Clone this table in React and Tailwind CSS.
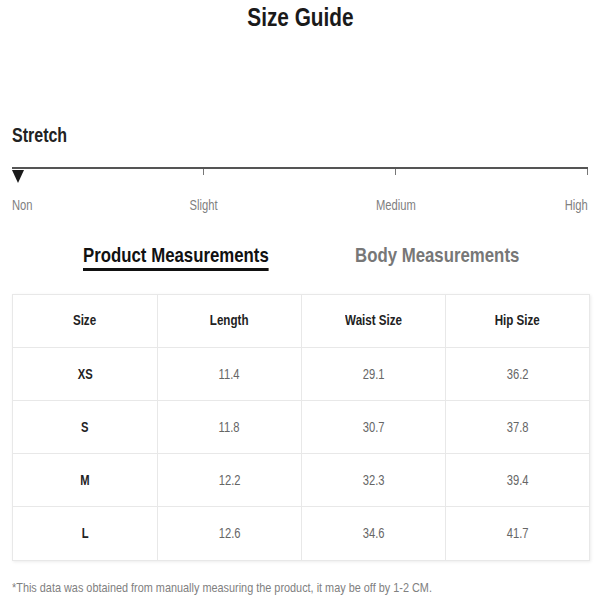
import React from 'react';

const rows = [
  ['XS', '11.4', '29.1', '36.2'],
  ['S', '11.8', '30.7', '37.8'],
  ['M', '12.2', '32.3', '39.4'],
  ['L', '12.6', '34.6', '41.7'],
];

const headers = ['Size', 'Length', 'Waist Size', 'Hip Size'];

// Arial Narrow is not installed, so squeeze Liberation Sans horizontally
const Narrow = ({ className = '', children }) => (
  <span className={`inline-block whitespace-nowrap scale-x-[0.8] ${className}`}>{children}</span>
);

export default function App() {
  return (
    <div className="w-[600px] h-[600px] bg-white overflow-hidden font-['Liberation_Sans',Arial,sans-serif]">
      {/* Title */}
      <h1 className="text-center text-[26px] leading-[34px] font-bold text-[#1a1a1a]">
        <Narrow>Size Guide</Narrow>
      </h1>

      {/* Stretch scale */}
      <div className="px-3 pt-[89px]">
        <div className="text-[20px] leading-[24px] font-bold text-[#222]">
          <Narrow className="origin-left">Stretch</Narrow>
        </div>

        <div className="mt-[20px] border-t-2 border-[#555] flex justify-between items-start">
          <div className="w-0">
            <div className="mt-px w-0 h-0 border-l-[6px] border-r-[6px] border-t-[13px] border-l-transparent border-r-transparent border-t-[#1a1a1a]" />
          </div>
          <div className="w-px h-[6px] bg-[#777]" />
          <div className="w-px h-[6px] bg-[#777]" />
          <div className="w-px h-[6px] bg-[#777]" />
        </div>

        <div className="mt-[13px] flex justify-between text-[14px] leading-[18px] text-[#808080]">
          <div className="w-0 flex justify-start"><Narrow className="origin-left">Non</Narrow></div>
          <div className="w-0 flex justify-center"><Narrow>Slight</Narrow></div>
          <div className="w-0 flex justify-center"><Narrow>Medium</Narrow></div>
          <div className="w-0 flex justify-end"><Narrow className="origin-right">High</Narrow></div>
        </div>
      </div>

      {/* Tabs */}
      <div className="mt-[28px] pl-[83px] flex text-[21px] leading-[26px] font-bold">
        <div className="w-[272px]">
          <Narrow className="origin-left text-[#111] border-b-[3px] border-[#111]">Product Measurements</Narrow>
        </div>
        <div>
          <Narrow className="origin-left text-[#777]">Body Measurements</Narrow>
        </div>
      </div>

      {/* Table */}
      <div className="ml-3 mt-[23px] w-[578px] border border-[#e8e8e8] shadow-[1px_1px_3px_rgba(0,0,0,0.08)]">
        <div className="grid grid-cols-4 h-[53px] border-b border-[#e8e8e8] text-[14.5px] font-bold text-[#222]">
          {headers.map((h, i) => (
            <div key={h} className={`flex items-center justify-center ${i > 0 ? 'border-l border-[#e8e8e8]' : ''}`}>
              <Narrow>{h}</Narrow>
            </div>
          ))}
        </div>
        {rows.map((r, ri) => (
          <div key={r[0]} className={`grid grid-cols-4 h-[53px] text-[14px] ${ri < rows.length - 1 ? 'border-b border-[#e8e8e8]' : ''}`}>
            {r.map((c, i) => (
              <div key={i} className={`flex items-center justify-center ${i > 0 ? 'border-l border-[#e8e8e8] text-[#666]' : 'font-bold text-[#222]'}`}>
                <Narrow>{c}</Narrow>
              </div>
            ))}
          </div>
        ))}
      </div>

      {/* Footnote */}
      <p className="px-3 mt-[19px] text-[13.6px] leading-[16px] text-[#808080]">
        <Narrow className="origin-left">*This data was obtained from manually measuring the product, it may be off by 1-2 CM.</Narrow>
      </p>
    </div>
  );
}
